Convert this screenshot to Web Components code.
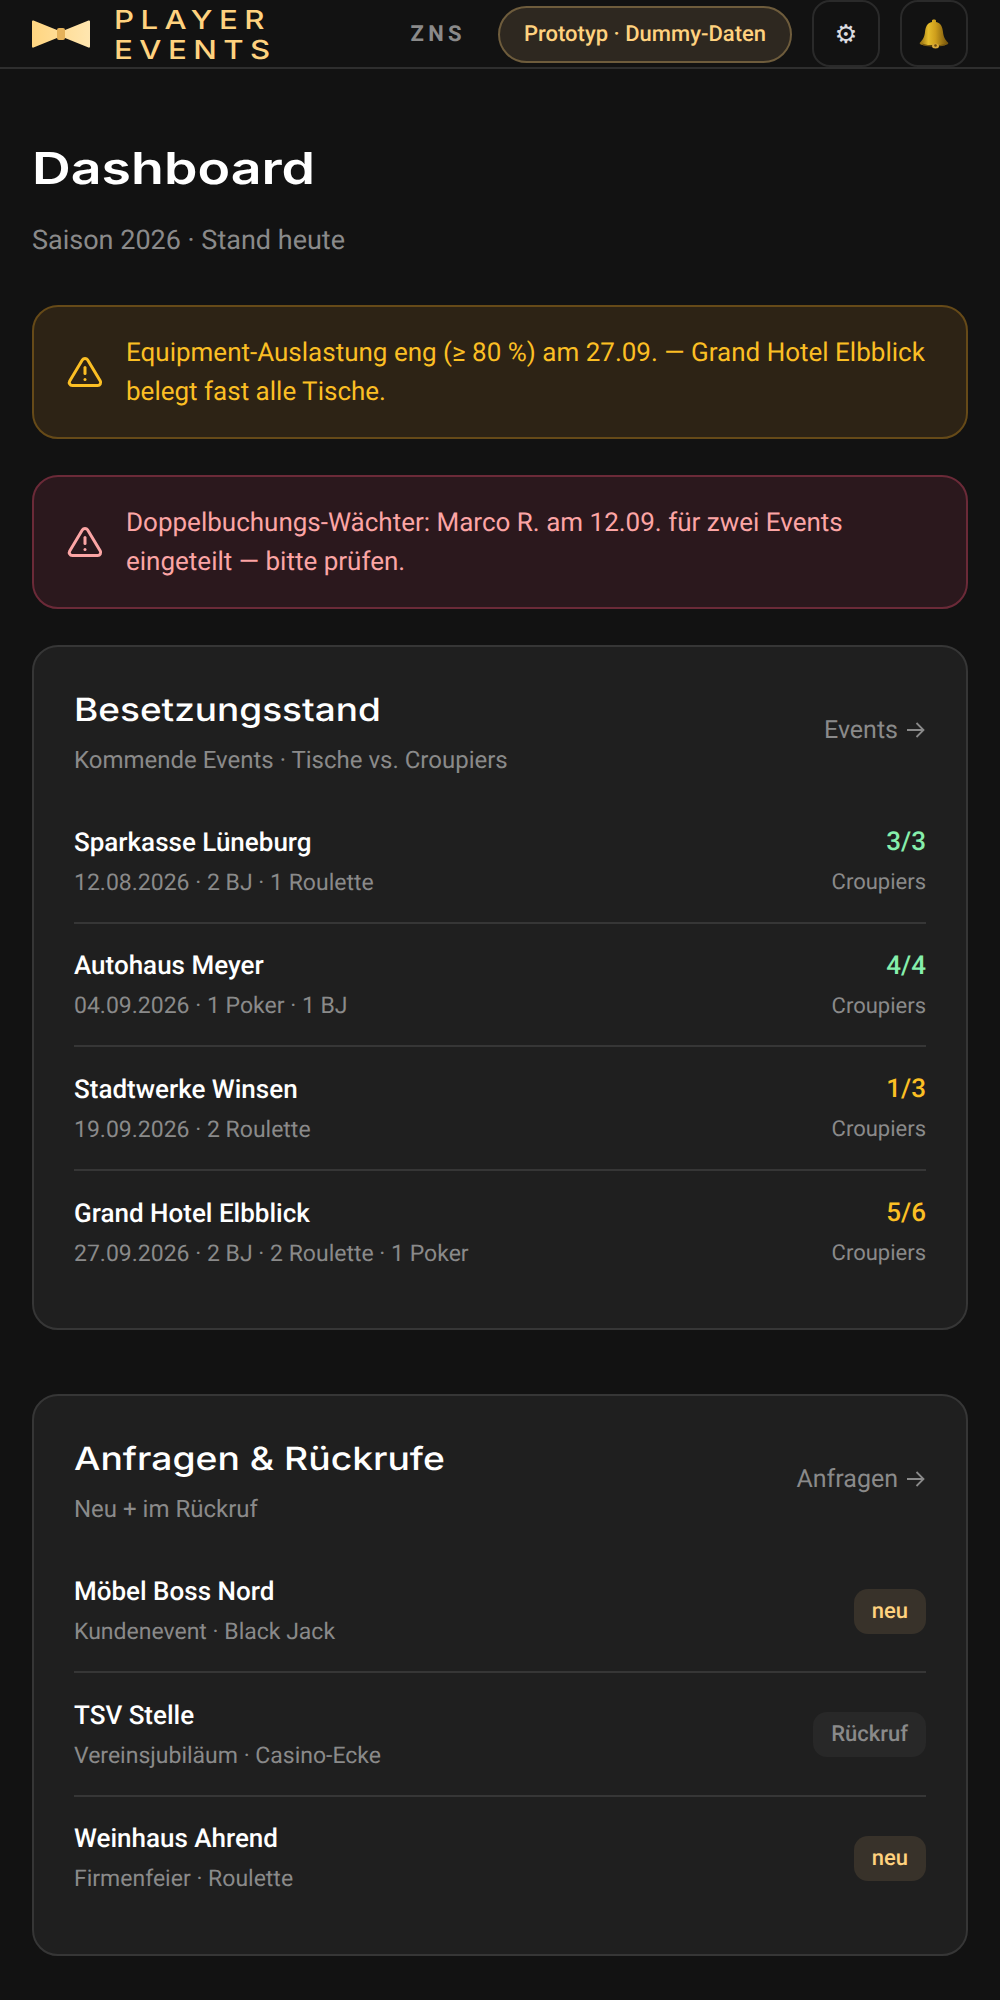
<!DOCTYPE html>
<html lang="de">
<head>
<meta charset="utf-8">
<title>Player Events</title>
<style>
  html, body { margin: 0; padding: 0; background: #121212; }
  body { font-family: Roboto, "Noto Sans", sans-serif; color: #fff; text-rendering: geometricPrecision; }
  main { display: flex; flex-direction: column; padding: 0 32px 40px; }
</style>
</head>
<body>

<app-header></app-header>
<main>
  <page-title heading="Dashboard" sub="Saison 2026 · Stand heute"></page-title>
  <alert-box kind="warn">Equipment-Auslastung eng (≥ 80 %) am 27.09. — Grand Hotel Elbblick belegt fast alle Tische.</alert-box>
  <alert-box kind="danger">Doppelbuchungs-Wächter: Marco R. am 12.09. für zwei Events eingeteilt — bitte prüfen.</alert-box>

  <list-card heading="Besetzungsstand" sub="Kommende Events · Tische vs. Croupiers" link="Events" squeeze="1.155">
    <list-row name="Sparkasse Lüneburg" info="12.08.2026 · 2 BJ · 1 Roulette"><count-cell value="3/3" tone="ok"></count-cell></list-row>
    <list-row name="Autohaus Meyer" info="04.09.2026 · 1 Poker · 1 BJ"><count-cell value="4/4" tone="ok"></count-cell></list-row>
    <list-row name="Stadtwerke Winsen" info="19.09.2026 · 2 Roulette"><count-cell value="1/3" tone="low"></count-cell></list-row>
    <list-row name="Grand Hotel Elbblick" info="27.09.2026 · 2 BJ · 2 Roulette · 1 Poker"><count-cell value="5/6" tone="low"></count-cell></list-row>
  </list-card>

  <list-card heading="Anfragen &amp; Rückrufe" sub="Neu + im Rückruf" link="Anfragen" squeeze="1.165" style="margin-top:64px">
    <list-row name="Möbel Boss Nord" info="Kundenevent · Black Jack"><status-tag tone="new">neu</status-tag></list-row>
    <list-row name="TSV Stelle" info="Vereinsjubiläum · Casino-Ecke"><status-tag>Rückruf</status-tag></list-row>
    <list-row name="Weinhaus Ahrend" info="Firmenfeier · Roulette"><status-tag tone="new">neu</status-tag></list-row>
  </list-card>
</main>

<script>
class AppHeader extends HTMLElement {
    constructor() {
        super();
        this.attachShadow({mode: "open"});
    }
    connectedCallback() {
        this.shadowRoot.innerHTML = `
            <style>
                :host { display: flex; align-items: center; height: 67px; padding: 0 32px; border-bottom: 2px solid #2e2e2e; }
                .logo { display: flex; align-items: center; gap: 24px; margin-top: 1px; }
                .word { display: flex; flex-direction: column; width: 140px; margin-top: 3px; font-family: Inter, sans-serif; font-weight: 500; font-size: 26px; line-height: 30px; letter-spacing: 5.4px; color: #ffd27f; transform: scaleX(1.2); transform-origin: left center; }
                .zns { margin: 2px 32px 0 auto; font-size: 22px; font-weight: 700; letter-spacing: 4.4px; color: #8a8a8a; }
                .pill { box-sizing: border-box; height: 57px; margin-top: 1px; display: flex; align-items: center; padding: 0 24px; border: 2px solid #6e5c3c; border-radius: 29px; background: #2e2820; color: #ffd27f; font-size: 22px; font-weight: 500; }
                button { box-sizing: border-box; display: grid; place-items: center; width: 68px; height: 67px; margin-left: 20px; padding: 0; background: none; border: 2px solid #2a2a2a; border-radius: 18px; font-size: 25.600px; color: #dcdce0; font-family: "DejaVu Sans", sans-serif; }
            </style>
            <div class="logo">
                <svg width="58" height="28" viewBox="0 0 58 28">
                    <defs><linearGradient id="g" x1="0" x2="1"><stop offset="0" stop-color="#ffd580"/><stop offset="1" stop-color="#ffe6b0"/></linearGradient></defs>
                    <path d="M1.500 0.500 L25 10 V18 L1.500 27.500 Q0 28 0 26.500 V1.500 Q0 0 1.500 0.500Z M56.500 0.500 L33 10 V18 L56.500 27.500 Q58 28 58 26.500 V1.500 Q58 0 56.500 0.500Z" fill="url(#g)"/>
                    <rect x="25" y="8" width="8" height="12" rx="2" fill="#e5b25a"/>
                </svg>
                <div class="word"><span>PLAYER</span><span>EVENTS</span></div>
            </div>
            <span class="zns">ZNS</span>
            <span class="pill">Prototyp · Dummy-Daten</span>
            <button>⚙&#xFE0E;</button>
            <button>
                <svg width="30" height="30" viewBox="0 0 30 30">
                    <defs>
                        <linearGradient id="b" x1="0" x2="1">
                            <stop offset="0" stop-color="#8f6a10"/>
                            <stop offset=".3" stop-color="#e6bd2c"/>
                            <stop offset=".55" stop-color="#cf9f1c"/>
                            <stop offset="1" stop-color="#6f4f0c"/>
                        </linearGradient>
                    </defs>
                    <path d="M13 1.500 C13 0 17 0 17 1.500 V3 C22 4 23.500 8 24 13 C24.500 18 26 20.500 29 23.500 C30 25 28 26 26 26 H4 C2 26 0 25 1 23.500 C4 20.500 5.500 18 6 13 C6.500 8 8 4 13 3 Z" fill="url(#b)"/>
                    <path d="M3 24.500 C10 27 20 27 27 24.500 L26 26.500 C20 28 10 28 4 26.500Z" fill="#7a5a10"/>
                    <ellipse cx="16.500" cy="27" rx="3.500" ry="2.500" fill="#d9a93a"/>
                    <circle cx="16.500" cy="26.500" r="1.300" fill="#6b4a0c"/>
                </svg>
            </button>
        `;
    }
}

class PageTitle extends HTMLElement {
    constructor() {
        super();
        this.attachShadow({mode: "open"});
    }
    connectedCallback() {
        this.shadowRoot.innerHTML = `
            <style>
                :host { display: block; padding-top: 71px; margin-bottom: 47px; }
                h1 { width: fit-content; margin: 0; font-family: Inter, sans-serif; font-weight: 600; font-size: 44px; line-height: 56px; color: #fff; transform: scaleX(1.22); transform-origin: left center; }
                p { margin: 26px 0 0; font-size: 27px; line-height: 36px; color: #8a8a8a; }
            </style>
            <h1>${this.getAttribute("heading")}</h1>
            <p>${this.getAttribute("sub")}</p>
        `;
    }
}

class AlertBox extends HTMLElement {
    constructor() {
        super();
        this.attachShadow({mode: "open"});
    }
    connectedCallback() {
        this.shadowRoot.innerHTML = `
            <style>
                :host { display: flex; align-items: center; gap: 23px; box-sizing: border-box; height: 134px; margin-bottom: 36px; padding: 0 40px 0 33px; border-radius: 26px; border: 2px solid; font-size: 26px; line-height: 38.400px; }
                :host([kind="warn"]) { background: #2d2315; border-color: #664a18; color: #fbbf24; }
                :host([kind="danger"]) { background: #2b181d; border-color: #6b2a38; color: #fca5a5; }
                svg { flex: none; }
                div { padding-top: 1px; }
            </style>
            <svg width="36" height="36" viewBox="0 0 24 24" fill="none" stroke="currentColor" stroke-width="2" stroke-linecap="round" stroke-linejoin="round">
                <path d="M10.300 3.900 1.800 18a2 2 0 0 0 1.700 3h17a2 2 0 0 0 1.700-3L13.700 3.900a2 2 0 0 0-3.400 0z"/>
                <path d="M12 9v4"/><path d="M12 17h.01"/>
            </svg>
            <div><slot></slot></div>
        `;
    }
}

class ListCard extends HTMLElement {
    constructor() {
        super();
        this.attachShadow({mode: "open"});
    }
    connectedCallback() {
        this.shadowRoot.innerHTML = `
            <style>
                :host { display: block; padding: 42px 40px 34px 40px; background: #1f1f1f; border: 2px solid #363636; border-radius: 26px; }
                .head { display: flex; justify-content: space-between; align-items: center; margin-bottom: 23px; }
                h2 { width: fit-content; margin: 0; font-family: Inter, sans-serif; font-weight: 500; font-size: 32px; line-height: 42px; color: #fff; transform: scaleX(${this.getAttribute("squeeze")}); transform-origin: left center; }
                p { margin: 12px 0 0; font-size: 24px; line-height: 34px; color: #8a8a8a; }
                a { display: flex; align-items: center; gap: 8px; margin: 0 1px 6px 0; font-size: 25px; color: #8a8a8a; }
                ::slotted(list-row:not(:last-child)) { border-bottom-color: #363636; }
            </style>
            <div class="head">
                <div>
                    <h2>${this.getAttribute("heading").replace("&", "&amp;")}</h2>
                    <p>${this.getAttribute("sub")}</p>
                </div>
                <a>${this.getAttribute("link")}
                    <svg width="19" height="18" viewBox="0 0 19 18" fill="none" stroke="currentColor" stroke-width="1.800"><path d="M1 9h16M10.500 2l7 7-7 7"/></svg>
                </a>
            </div>
            <slot></slot>
        `;
    }
}

class ListRow extends HTMLElement {
    constructor() {
        super();
        this.attachShadow({mode: "open"});
    }
    connectedCallback() {
        this.shadowRoot.innerHTML = `
            <style>
                :host { display: flex; justify-content: space-between; align-items: center; box-sizing: border-box; height: 123.600px; padding-top: 2px; border-bottom: 2px solid transparent; }
                .name { font-size: 26px; font-weight: 500; line-height: 36px; color: #fff; }
                .info { margin-top: 6px; font-size: 23px; line-height: 32px; color: #8a8a8a; }
            </style>
            <div>
                <div class="name">${this.getAttribute("name")}</div>
                <div class="info">${this.getAttribute("info")}</div>
            </div>
            <slot></slot>
        `;
    }
}

class CountCell extends HTMLElement {
    constructor() {
        super();
        this.attachShadow({mode: "open"});
    }
    connectedCallback() {
        this.shadowRoot.innerHTML = `
            <style>
                :host { display: block; text-align: right; }
                .value { font-size: 26px; font-weight: 500; line-height: 36px; }
                :host([tone="ok"]) .value { color: #86efac; }
                :host([tone="low"]) .value { color: #fbbf24; }
                .label { margin-top: 7px; font-size: 22px; line-height: 32px; color: #8a8a8a; }
            </style>
            <div class="value">${this.getAttribute("value")}</div>
            <div class="label">Croupiers</div>
        `;
    }
}

class StatusTag extends HTMLElement {
    constructor() {
        super();
        this.attachShadow({mode: "open"});
    }
    connectedCallback() {
        this.shadowRoot.innerHTML = `
            <style>
                :host { display: block; padding: 0 18px; height: 45px; line-height: 45px; border-radius: 14px; font-size: 22px; font-weight: 500; background: #282828; color: #8a8a8a; }
                :host([tone="new"]) { background: #38322a; color: #ffd27f; }
            </style>
            <slot></slot>
        `;
    }
}

customElements.define("app-header", AppHeader);
customElements.define("page-title", PageTitle);
customElements.define("alert-box", AlertBox);
customElements.define("list-card", ListCard);
customElements.define("list-row", ListRow);
customElements.define("count-cell", CountCell);
customElements.define("status-tag", StatusTag);
</script>
</body>
</html>
